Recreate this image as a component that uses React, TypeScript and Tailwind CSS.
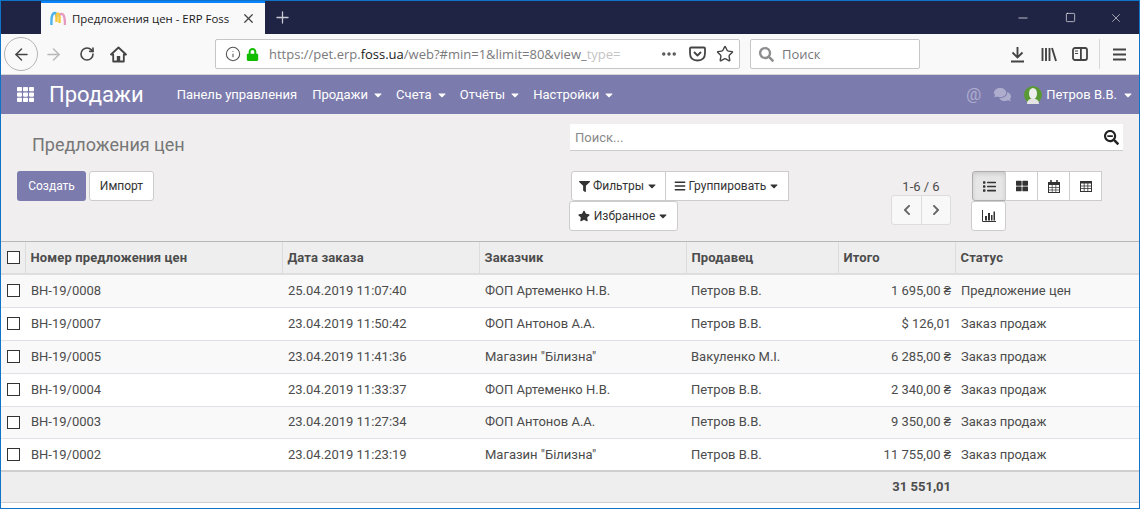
import React from 'react';
import { FaFilter, FaBars, FaStar, FaTh, FaThLarge, FaComments, FaSearchMinus, FaChevronLeft, FaChevronRight, FaLock, FaSearch, FaCaretDown, FaList } from 'react-icons/fa';
import { ArrowLeft, ArrowRight, RotateCw, Info, MoreHorizontal, Star, Plus, X, Minus, Square } from 'lucide-react';

const rows = [
  ['ВН-19/0008', '25.04.2019 11:07:40', 'ФОП Артеменко Н.В.', 'Петров В.В.', '1 695,00 ₴', 'Предложение цен'],
  ['ВН-19/0007', '23.04.2019 11:50:42', 'ФОП Антонов А.А.', 'Петров В.В.', '$ 126,01', 'Заказ продаж'],
  ['ВН-19/0005', '23.04.2019 11:41:36', 'Магазин "Білизна"', 'Вакуленко М.І.', '6 285,00 ₴', 'Заказ продаж'],
  ['ВН-19/0004', '23.04.2019 11:33:37', 'ФОП Артеменко Н.В.', 'Петров В.В.', '2 340,00 ₴', 'Заказ продаж'],
  ['ВН-19/0003', '23.04.2019 11:27:34', 'ФОП Антонов А.А.', 'Петров В.В.', '9 350,00 ₴', 'Заказ продаж'],
  ['ВН-19/0002', '23.04.2019 11:23:19', 'Магазин "Білизна"', 'Петров В.В.', '11 755,00 ₴', 'Заказ продаж'],
];

const menu = ['Продажи', 'Счета', 'Отчёты', 'Настройки'];

const Check = () => <span className="block w-[13px] h-[13px] border border-[#333] bg-white ml-[6px]" />;

const App = () => {
  return (
    <div className="w-[1140px] h-[509px] overflow-hidden border border-[#0f74c8] bg-white font-['Roboto',sans-serif] text-[13px] text-[#4c4c4c] flex flex-col">
      {/* browser tabs */}
      <div className="h-[33px] bg-[#1f2344] flex items-stretch text-white shrink-0">
        <div className="w-10" />
        <div className="w-[224px] bg-[#f9f9fa] border-t-2 border-[#0a84ff] flex items-center pl-[9px] pr-[9px] font-['Open_Sans',sans-serif] text-[11.4px] text-[#1a1a1a]">
          <svg width="16" height="16" viewBox="0 0 16 16" className="mr-[6px] shrink-0">
            <path d="M1.5 14 C1 5 2.5 2 5 2 C6 2 6.5 4 6.5 6" fill="none" stroke="#4db3ec" strokeWidth="2.4" />
            <path d="M6.5 11 V5 C6.5 2 9.5 2 9.5 5 V12" fill="none" stroke="#f6c83a" strokeWidth="2.4" />
            <path d="M10 4 C13 0.5 15 5 15 14" fill="none" stroke="#e79ac0" strokeWidth="2.4" />
          </svg>
          <span className="flex-1 whitespace-nowrap">Предложения цен - ERP Foss</span>
          <X size={15} strokeWidth={2} className="text-[#444]" />
        </div>
        <div className="w-[34px] flex items-center justify-center">
          <Plus size={19} strokeWidth={1.6} className="text-[#c9cad3]" />
        </div>
        <div className="flex-1" />
        <div className="flex items-center gap-[33px] pr-[16px] text-white">
          <Minus size={14} strokeWidth={1.2} className="mr-[2px]" />
          <Square size={11} strokeWidth={1.4} />
          <X size={14} strokeWidth={1} />
        </div>
      </div>

      {/* browser toolbar */}
      <div className="h-[41px] bg-[#f9f9fa] border-b border-[#d6d6d7] flex items-center shrink-0 font-['Open_Sans',sans-serif]">
        <div className="ml-[3px] w-[34px] h-[34px] rounded-full border border-[#b4b4b6] flex items-center justify-center">
          <ArrowLeft size={19} strokeWidth={1.8} className="text-[#444]" />
        </div>
        <ArrowRight size={19} strokeWidth={1.8} className="ml-[6px] text-[#b8b8b9]" />
        <RotateCw size={16} strokeWidth={2.4} className="ml-[16px] text-[#444]" />
        <svg width="17" height="17" viewBox="0 0 17 17" className="ml-[15px] text-[#444]">
          <path d="M8.5 1.5 L1 8.5 H3.2 V15.5 H13.8 V8.5 H16 Z" fill="none" stroke="currentColor" strokeWidth="1.8" strokeLinejoin="round" />
          <rect x="6.8" y="10" width="3.4" height="5.5" fill="currentColor" />
        </svg>
        <div className="ml-[88px] w-[525px] h-[30px] bg-white border border-[#c6c6c8] rounded-[2px] flex items-center pl-[9px] pr-[5px]">
          <Info size={16} strokeWidth={1.6} className="text-[#555] shrink-0" />
          <FaLock size={13} className="ml-[5px] text-[#12bc00] shrink-0" />
          <span className="ml-[10px] pt-[2px] w-[353px] overflow-hidden whitespace-nowrap text-[13px] text-[#7a7a7c]">
            https://pet.erp.<span className="text-[#1a1a1a]">foss.ua</span>/web?#min=1&amp;limit=80&amp;view_<span className="text-[#c4c4c5]">type=</span>
          </span>
          <MoreHorizontal size={18} strokeWidth={2.6} className="ml-[38px] text-[#555]" />
          <svg width="17" height="16" viewBox="0 0 17 16" className="ml-[11px] text-[#444]">
            <path d="M2 1.5 H15 Q16 1.5 16 2.5 V7 Q16 14.5 8.5 14.5 Q1 14.5 1 7 V2.5 Q1 1.5 2 1.5 Z M5 6 L8.5 9.5 L12 6" fill="none" stroke="currentColor" strokeWidth="1.8" strokeLinejoin="round" />
          </svg>
          <Star size={18} strokeWidth={1.9} className="ml-[10px] text-[#444]" />
        </div>
        <div className="ml-[10px] w-[170px] h-[30px] bg-white border border-[#c6c6c8] rounded-[2px] flex items-center pl-[8px]">
          <FaSearch size={15} className="text-[#8d8d8f]" />
          <span className="ml-[8px] pt-[2px] text-[13px] text-[#77777a]">Поиск</span>
        </div>
        <div className="ml-[90px] flex items-center text-[#444]">
          <svg width="15" height="17" viewBox="0 0 15 17">
            <path d="M7.5 1 V11 M2.5 6.5 L7.5 11.5 L12.5 6.5" fill="none" stroke="currentColor" strokeWidth="1.9" />
            <rect x="1" y="14.5" width="13" height="2" fill="currentColor" />
          </svg>
          <svg width="16" height="15" viewBox="0 0 16 15" className="ml-[16px]">
            <path d="M1.5 1 V14 M5 1 V14 M8.5 1 V14 M11 1 L15 14" fill="none" stroke="currentColor" strokeWidth="1.9" />
          </svg>
          <svg width="16" height="14" viewBox="0 0 16 14" className="ml-[15px]">
            <rect x="1" y="1" width="14" height="12" rx="2" fill="none" stroke="currentColor" strokeWidth="1.8" />
            <rect x="8" y="1" width="1.8" height="12" fill="currentColor" />
            <path d="M3 4 H6 M3 6.5 H6" stroke="currentColor" strokeWidth="1.2" />
          </svg>
          <div className="ml-[11px] w-px h-[30px] bg-[#d8d8d9]" />
          <svg width="13" height="13" viewBox="0 0 13 13" className="ml-[13px]">
            <path d="M0 1.5 H13 M0 6.5 H13 M0 11.5 H13" stroke="currentColor" strokeWidth="1.8" />
          </svg>
        </div>
      </div>

      {/* odoo app bar */}
      <div className="h-[39px] bg-[#7c7bad] flex items-center shrink-0 text-white">
        <FaTh size={17} className="ml-4" />
        <span className="ml-[15px] text-[22px] leading-none">Продажи</span>
        <span className="ml-[33px] text-[13px]">Панель управления</span>
        {menu.map((m, i) => (
          <span key={m} className={`flex items-center text-[13px] ${i === 0 ? 'ml-[15px]' : 'ml-[12px]'}`}>
            {m}
            <FaCaretDown size={12} className="ml-[4px]" />
          </span>
        ))}
        <div className="flex-1" />
        <span className="text-[17px] leading-none text-[#aeadcd]">@</span>
        <FaComments size={17} className="ml-[13px] text-[#aeadcd]" />
        <svg width="18" height="18" viewBox="0 0 18 18" className="ml-[13px]">
          <circle cx="9" cy="9" r="9" fill="#5a9a35" />
          <ellipse cx="9" cy="7.5" rx="4" ry="5.5" fill="#eeeeee" />
          <path d="M3 18 C3 13.5 6 13 9 12 C12 13 15 13.5 15 18 Z" fill="#e4e4e4" />
        </svg>
        <span className="ml-[4px] text-[13px]">Петров В.В.</span>
        <FaCaretDown size={12} className="ml-[5px] mr-[5px]" />
      </div>

      {/* control panel */}
      <div className="h-[128px] bg-[#f0eeee] flex shrink-0 border-b border-[#b8b8b8]">
        <div className="w-[568px] shrink-0 pt-[20px] pl-4">
          <div className="ml-[15px] text-[18px] leading-[22px] text-[#777]">Предложения цен</div>
          <div className="flex gap-[3px] mt-[15px] text-[12px]">
            <button className="w-[69px] h-[30px] bg-[#7c7bad] text-white rounded-[3px]">Создать</button>
            <button className="w-[65px] h-[30px] bg-white border border-[#ccc] rounded-[3px] text-[#333]">Импорт</button>
          </div>
        </div>
        <div className="flex-1 pt-[10px]">
          <div className="ml-[1px] w-[553px] h-[27px] bg-white border-b border-[#ccc] flex items-center justify-between pl-[5px] pr-[4px]">
            <span className="pt-[2px] text-[13px] text-[#8a8a8a]">Поиск...</span>
            <FaSearchMinus size={15} className="text-[#222]" />
          </div>
          <div className="flex mt-[20px] text-[12px] text-[#333]">
            <div className="w-[322px]">
              <div className="flex ml-[2px]">
                <button className="w-[95px] h-[30px] bg-white border border-[#ccc] rounded-l-[3px] flex items-center justify-center">
                  <FaFilter size={11} className="mr-[3px]" />Фильтры<FaCaretDown size={12} className="ml-[2px]" />
                </button>
                <button className="w-[124px] -ml-px h-[30px] bg-white border border-[#ccc] flex items-center justify-center">
                  <FaBars size={12} className="mr-[3px]" />Группировать<FaCaretDown size={12} className="ml-[2px]" />
                </button>
              </div>
              <button className="w-[109px] h-[30px] bg-white border border-[#ccc] rounded-[3px] flex items-center justify-center">
                <FaStar size={12} className="mr-[4px]" />Избранное<FaCaretDown size={12} className="ml-[2px]" />
              </button>
            </div>
            <div className="w-[80px] flex flex-col items-start">
              <span className="w-[60px] text-center h-[24px] leading-[32px] text-[13px] text-[#4c4c4c]">1-6 / 6</span>
              <div className="flex">
                <button className="w-[31px] h-[30px] bg-[#f8f8f8] border border-[#ddd] rounded-l-[3px] flex items-center justify-center text-[#666]">
                  <FaChevronLeft size={12} />
                </button>
                <button className="w-[30px] -ml-px h-[30px] bg-[#f8f8f8] border border-[#ddd] rounded-r-[3px] flex items-center justify-center text-[#666]">
                  <FaChevronRight size={12} />
                </button>
              </div>
            </div>
            <div>
              <div className="flex ml-[1px]">
                <button className="w-[34px] h-[30px] bg-[#e6e6e6] border border-[#adadad] rounded-l-[3px] flex items-center justify-center shadow-[inset_0_2px_4px_rgba(0,0,0,0.12)]">
                  <FaList size={13} />
                </button>
                <button className="w-[33px] -ml-px h-[30px] bg-white border border-[#ccc] flex items-center justify-center"><FaThLarge size={12} /></button>
                <button className="w-[33px] -ml-px h-[30px] bg-white border border-[#ccc] flex items-center justify-center">
                  <svg width="12" height="13" viewBox="0 0 12 13">
                    <rect x="0.5" y="2.5" width="11" height="10" fill="none" stroke="#333" />
                    <rect x="0.5" y="2.5" width="11" height="2.5" fill="#333" />
                    <path d="M3 0 V3 M9 0 V3" stroke="#333" strokeWidth="1.6" />
                    <path d="M4.2 5 V12 M7.8 5 V12 M1 7.5 H11 M1 10 H11" stroke="#333" strokeWidth="0.7" />
                  </svg>
                </button>
                <button className="w-[33px] -ml-px h-[30px] bg-white border border-[#ccc] flex items-center justify-center">
                  <svg width="12" height="11" viewBox="0 0 12 11">
                    <rect x="0.5" y="0.5" width="11" height="10" fill="none" stroke="#333" />
                    <rect x="0.5" y="0.5" width="11" height="2" fill="#333" />
                    <path d="M4.2 2 V10 M7.8 2 V10 M1 5 H11 M1 7.5 H11" stroke="#333" strokeWidth="0.8" />
                  </svg>
                </button>
              </div>
              <button className="w-[35px] h-[30px] bg-white border border-[#ccc] rounded-[3px] flex items-center justify-center">
                <svg width="14" height="12" viewBox="0 0 14 12">
                  <path d="M0.5 0 V11.5 H14" fill="none" stroke="#333" />
                  <path d="M3 6 H5 V10.5 H3 Z M6 3 H8 V10.5 H6 Z M9 5 H10.5 V10.5 H9 Z M11.5 1.5 H13 V10.5 H11.5 Z" fill="#333" />
                </svg>
              </button>
            </div>
          </div>
        </div>
      </div>

      {/* list */}
      <table className="w-full table-fixed border-collapse text-[13px] text-[#4c4c4c]">
        <colgroup>
          <col className="w-[24px]" />
          <col className="w-[257px]" />
          <col className="w-[197px]" />
          <col className="w-[207px]" />
          <col className="w-[152px]" />
          <col className="w-[117px]" />
          <col />
        </colgroup>
        <thead>
          <tr className="h-[32px] bg-[#eeeeee] border-b-[2px] border-[#dedede] font-bold text-left tracking-[0.13px]">
            <th className="border-r border-[#dcdcdc]"><Check /></th>
            <th className="pl-[5px] pt-[1px] border-r border-[#dcdcdc]">Номер предложения цен</th>
            <th className="pl-[5px] pt-[1px] border-r border-[#dcdcdc]">Дата заказа</th>
            <th className="pl-[5px] pt-[1px] border-r border-[#dcdcdc]">Заказчик</th>
            <th className="pl-[5px] pt-[1px] border-r border-[#dcdcdc]">Продавец</th>
            <th className="pl-[5px] pt-[1px] border-r border-[#dcdcdc]">Итого</th>
            <th className="pl-[5px] pt-[1px]">Статус</th>
          </tr>
        </thead>
        <tbody>
          {rows.map((r, i) => (
            <tr key={r[0]} className={`${i === 4 ? 'h-[32px]' : 'h-[33px]'} border-b border-[#dee2e6] ${i % 2 === 0 ? 'bg-[#f9f9f9]' : 'bg-white'}`}>
              <td><Check /></td>
              <td className="pl-[6px]">{r[0]}</td>
              <td className="pl-[6px]">{r[1]}</td>
              <td className="pl-[6px]">{r[2]}</td>
              <td className="pl-[5px]">{r[3]}</td>
              <td className="pr-[4px] text-right">{r[4]}</td>
              <td className="pl-[6px]">{r[5]}</td>
            </tr>
          ))}
        </tbody>
        <tfoot>
          <tr className="h-[31px] bg-[#eeeeee] border-t-[2px] border-b border-[#cfcfcf] font-bold">
            <td colSpan={5} />
            <td className="pr-[4px] text-right">31 551,01</td>
            <td />
          </tr>
        </tfoot>
      </table>
    </div>
  );
};

export default App;
